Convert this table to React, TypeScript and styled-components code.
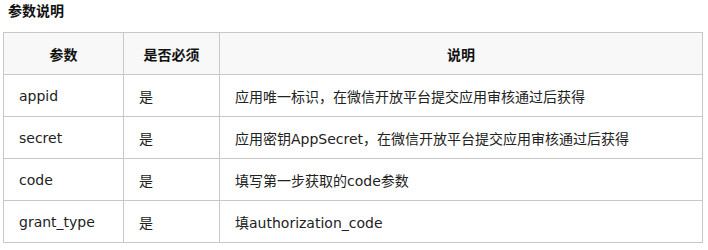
import React from "react";
import styled, { createGlobalStyle } from "styled-components";

const GlobalStyle = createGlobalStyle`
  html, body { margin: 0; padding: 0; background: #fff; }
  body {
    font-family: "DejaVu Sans", "Noto Sans CJK SC", sans-serif;
    color: #222;
  }
`;

const Page = styled.div`
  width: 708px;
  padding: 1px 0 0 3px;
  box-sizing: border-box;
`;

const Title = styled.h4`
  margin: 0 0 11px 5px;
  font-size: 14px;
  line-height: 20px;
  font-weight: bold;
  color: #111;
`;

const Table = styled.table`
  border-collapse: collapse;
  table-layout: fixed;
  width: 700px;
  font-size: 14px;
`;

const HeadCell = styled.th`
  height: 41px;
  padding: 0 15px;
  border: 1px solid #c8c8c8;
  background: #f8f8f8;
  font-weight: bold;
  text-align: center;
  color: #111;
`;

const Cell = styled.td`
  height: 41px;
  padding: 0 15px;
  border: 1px solid #c8c8c8;
  text-align: left;
  white-space: nowrap;
`;

const rows = [
  { name: "appid", required: "是", desc: "应用唯一标识，在微信开放平台提交应用审核通过后获得" },
  { name: "secret", required: "是", desc: "应用密钥AppSecret，在微信开放平台提交应用审核通过后获得" },
  { name: "code", required: "是", desc: "填写第一步获取的code参数" },
  { name: "grant_type", required: "是", desc: "填authorization_code" },
];

export default function App() {
  return (
    <Page>
      <GlobalStyle />
      <Title>参数说明</Title>
      <Table>
        <colgroup>
          <col style={{ width: 120 }} />
          <col style={{ width: 96 }} />
          <col />
        </colgroup>
        <thead>
          <tr>
            <HeadCell>参数</HeadCell>
            <HeadCell>是否必须</HeadCell>
            <HeadCell>说明</HeadCell>
          </tr>
        </thead>
        <tbody>
          {rows.map((r) => (
            <tr key={r.name}>
              <Cell>{r.name}</Cell>
              <Cell>{r.required}</Cell>
              <Cell>{r.desc}</Cell>
            </tr>
          ))}
        </tbody>
      </Table>
    </Page>
  );
}
